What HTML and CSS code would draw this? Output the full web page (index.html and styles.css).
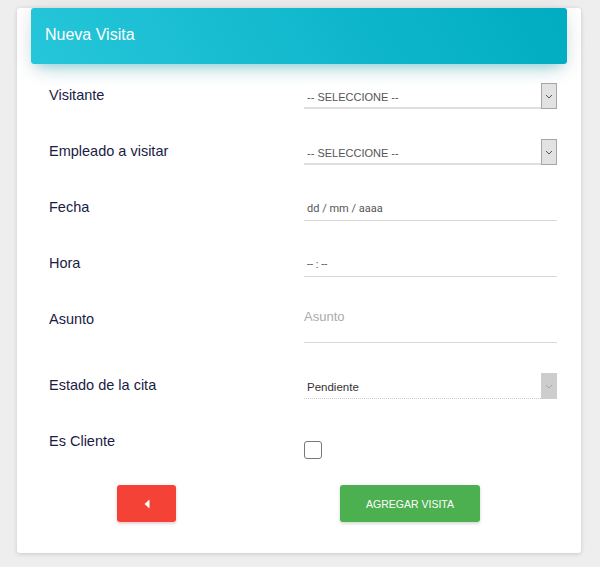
FILE: index.html
```html
<!DOCTYPE html>
<html lang="es">
<head>
<meta charset="utf-8">
<title>Nueva Visita</title>
<link rel="stylesheet" href="styles.css">
</head>
<body>
<div class="page">
  <div class="card">
    <div class="card-header">Nueva Visita</div>
    <form class="form">
      <div class="row">
        <label class="lbl">Visitante</label>
        <div class="ctrl select">
          <span class="sel-text">-- SELECCIONE --</span>
          <span class="sel-btn"><svg width="8" height="5" viewBox="0 0 8 5"><path d="M1 1l3 3 3-3" fill="none" stroke="#555" stroke-width="1"/></svg></span>
        </div>
      </div>
      <div class="row">
        <label class="lbl">Empleado a visitar</label>
        <div class="ctrl select">
          <span class="sel-text">-- SELECCIONE --</span>
          <span class="sel-btn"><svg width="8" height="5" viewBox="0 0 8 5"><path d="M1 1l3 3 3-3" fill="none" stroke="#555" stroke-width="1"/></svg></span>
        </div>
      </div>
      <div class="row">
        <label class="lbl">Fecha</label>
        <div class="ctrl text"><span class="val">dd / mm / aaaa</span></div>
      </div>
      <div class="row">
        <label class="lbl">Hora</label>
        <div class="ctrl text"><span class="val">-- : --</span></div>
      </div>
      <div class="row row-tall">
        <label class="lbl">Asunto</label>
        <div class="ctrl textarea"><span class="ph">Asunto</span></div>
      </div>
      <div class="row">
        <label class="lbl">Estado de la cita</label>
        <div class="ctrl select disabled">
          <span class="sel-text">Pendiente</span>
          <span class="sel-btn"><svg width="8" height="5" viewBox="0 0 8 5"><path d="M1 1l3 3 3-3" fill="none" stroke="#aaa" stroke-width="1"/></svg></span>
        </div>
      </div>
      <div class="row">
        <label class="lbl">Es Cliente</label>
        <div class="ctrl check"><span class="box"></span></div>
      </div>
      <div class="actions">
        <button type="button" class="btn btn-back"><svg width="6" height="10" viewBox="0 0 6 10"><path d="M5.5 0.5v9L0.5 5z" fill="#fff"/></svg></button>
        <button type="button" class="btn btn-add">AGREGAR VISITA</button>
      </div>
    </form>
  </div>
</div>
</body>
</html>
```

FILE: styles.css
```css
html, body {
  margin: 0;
  padding: 0;
  background: #eeeeee;
  font-family: "Liberation Sans", Arial, sans-serif;
}
.page {
  padding: 26px 19px 14px 17px;
}
.card {
  background: #fff;
  border-radius: 3px;
  box-shadow: 0 1px 4px rgba(0,0,0,0.16);
  padding: 0 0 31px 0;
}
.card-header {
  margin: -18px 14px 0 14px;
  height: 56px;
  box-sizing: border-box;
  padding: 17px 14px 0 14px;
  border-radius: 3px;
  background: linear-gradient(60deg, #26c6da, #00acc1);
  color: #fff;
  font-size: 16px;
  line-height: 20px;
  box-shadow: 0 12px 20px -10px rgba(0,188,212,0.28), 0 4px 20px 0 rgba(0,0,0,0.12), 0 7px 8px -5px rgba(0,188,212,0.2);
}
.form {
  padding: 3px 24px 0 32px;
}
.row {
  display: grid;
  grid-template-columns: 255px 253px;
  height: 56px;
}
.row-tall {
  height: 66px;
}
.lbl {
  align-self: start;
  margin-top: 19px;
  font-size: 14.5px;
  line-height: 18px;
  color: #1b1b45;
}
.ctrl {
  align-self: start;
  box-sizing: border-box;
}
.select {
  margin-top: 16px;
  height: 26px;
  display: flex;
  align-items: center;
  position: relative;
}
.select::after {
  content: "";
  position: absolute;
  left: 0;
  right: 16px;
  bottom: 0;
  height: 2px;
  background: #dedede;
}
.sel-text {
  flex: 1;
  padding-left: 3px;
  font-size: 11px;
  color: #555;
  padding-top: 2px;
}
.sel-btn {
  width: 16px;
  height: 26px;
  box-sizing: border-box;
  background: #e2e2e2;
  border: 1px solid #a5a5a5;
  display: flex;
  align-items: center;
  justify-content: center;
}
.disabled .sel-text {
  color: #333;
  font-size: 11.5px;
}
.disabled::after {
  height: 1px;
  background: repeating-linear-gradient(90deg, #ccc 0 1px, transparent 1px 2px);
}
.disabled .sel-btn {
  background: #cdcdcd;
  border-color: #cdcdcd;
}
.text {
  margin-top: 16px;
  height: 26px;
  border-bottom: 1px solid #d8d8d8;
  display: flex;
  align-items: center;
  padding: 2px 0 0 3px;
}
.val {
  font-family: Roboto, "Liberation Sans", sans-serif;
  font-size: 11px;
  color: #555;
}
.textarea {
  margin-top: 9px;
  height: 43px;
  border-bottom: 1px solid #d8d8d8;
  padding-top: 7px;
}
.ph {
  font-size: 13px;
  color: #aaa;
}
.check {
  margin-top: 28px;
}
.box {
  display: block;
  width: 18px;
  height: 18px;
  box-sizing: border-box;
  border: 1px solid #777;
  border-radius: 3px;
  background: #fff;
}
.actions {
  display: flex;
  align-items: center;
  margin-top: 16px;
  padding-left: 68px;
}
.btn {
  border: 0;
  border-radius: 3px;
  height: 37px;
  color: #fff;
  font-family: "Liberation Sans", Arial, sans-serif;
  cursor: pointer;
  display: flex;
  align-items: center;
  justify-content: center;
}
.btn-back {
  width: 59px;
  background: #f44336;
  box-shadow: 0 2px 2px 0 rgba(244,67,54,0.14), 0 1px 4px 0 rgba(0,0,0,0.12);
}
.btn-add {
  margin-left: 164px;
  width: 140px;
  background: #4caf50;
  font-size: 10.5px;
  box-shadow: 0 2px 2px 0 rgba(76,175,80,0.14), 0 1px 4px 0 rgba(0,0,0,0.12);
}
```
